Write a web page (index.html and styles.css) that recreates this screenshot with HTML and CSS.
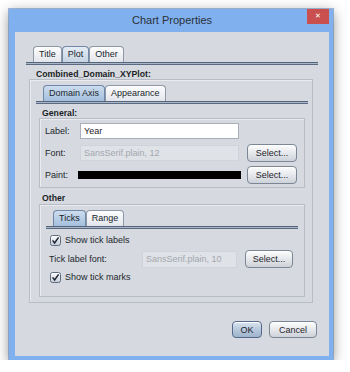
FILE: index.html
```html
<!DOCTYPE html>
<html lang="en">
<head>
    <meta charset="UTF-8">
    <title>Chart Properties</title>
    <link rel="stylesheet" href="styles.css">
</head>
<body>
    <div class="window">
        <div class="titlebar">
            <span></span>
            <span class="title">Chart Properties</span>
            <button type="button" class="close">&#x2715;</button>
        </div>

        <div class="client">
            <div class="tabpane">
                <div class="tabs">
                    <div class="tab">Title</div>
                    <div class="tab selected light">Plot</div>
                    <div class="tab">Other</div>
                </div>
                <div class="tab-line"></div>

                <div class="tab-body outer-body">
                    <div class="caption top-caption">Combined_Domain_XYPlot:</div>
                    <div class="group plot-group">
                        <div class="tabs">
                            <div class="tab selected">Domain Axis</div>
                            <div class="tab">Appearance</div>
                        </div>
                        <div class="tab-line"></div>

                        <div class="tab-body inner-body">
                            <div class="caption">General:</div>
                            <div class="group general">
                                <span class="lbl">Label:</span>
                                <input type="text" class="field" value="Year">
                                <span></span>

                                <span class="lbl">Font:</span>
                                <input type="text" class="field disabled" value="SansSerif.plain, 12" disabled>
                                <button type="button" class="btn select">Select...</button>

                                <span class="lbl">Paint:</span>
                                <div class="paint"></div>
                                <button type="button" class="btn select">Select...</button>
                            </div>

                            <div class="caption other-caption">Other</div>
                            <div class="group other">
                                <div class="tabs">
                                    <div class="tab selected">Ticks</div>
                                    <div class="tab">Range</div>
                                </div>
                                <div class="tab-line"></div>

                                <div class="ticks-body">
                                    <label class="check first-check">
                                        <svg width="11" height="11" viewBox="0 0 11 11">
                                            <defs>
                                                <linearGradient id="cb" x1="0" y1="0" x2="0" y2="1">
                                                    <stop offset="0" stop-color="#ffffff"/>
                                                    <stop offset="1" stop-color="#c4cbd5"/>
                                                </linearGradient>
                                            </defs>
                                            <rect x="0.5" y="0.5" width="10" height="10" rx="2" fill="url(#cb)" stroke="#5f6c80"/>
                                            <path d="M2.6 5.4 L4.6 8 L8.6 2.4" fill="none" stroke="#1d2330" stroke-width="1.5"/>
                                        </svg>
                                        Show tick labels
                                    </label>

                                    <div class="font-row">
                                        <span class="lbl tick-lbl">Tick label font:</span>
                                        <input type="text" class="field disabled tick-field" value="SansSerif.plain, 10" disabled>
                                        <button type="button" class="btn tick-select">Select...</button>
                                    </div>

                                    <label class="check last-check">
                                        <svg width="11" height="11" viewBox="0 0 11 11">
                                            <rect x="0.5" y="0.5" width="10" height="10" rx="2" fill="url(#cb)" stroke="#5f6c80"/>
                                            <path d="M2.6 5.4 L4.6 8 L8.6 2.4" fill="none" stroke="#1d2330" stroke-width="1.5"/>
                                        </svg>
                                        Show tick marks
                                    </label>
                                </div>
                            </div>
                        </div>
                    </div>
                </div>
            </div>

            <div class="buttons">
                <button type="button" class="btn default ok">OK</button>
                <button type="button" class="btn cancel">Cancel</button>
            </div>
        </div>
    </div>
</body>
</html>
```

FILE: styles.css
```css
* {
    margin: 0;
    padding: 0;
    box-sizing: border-box;
}

body {
    font-family: "Liberation Sans", Arial, sans-serif;
    font-size: 9px;
    color: #1f242b;
    background: #fff;
}

/* window frame */
.window {
    margin: 9px 0 0 9px;
    width: 324px;
    height: 351px;
    background: #80b1ee;
    padding: 0 4px 4px 6px;
    display: flex;
    flex-direction: column;
    box-shadow: 0 0 0 1px rgba(80, 120, 180, 0.5), 0 3px 12px rgba(0, 0, 0, 0.45);
}

.titlebar {
    height: 23px;
    display: grid;
    grid-template-columns: 1fr auto 1fr;
    align-items: start;
}

.title {
    font-size: 11px;
    line-height: 23px;
    color: #2b303a;
}

.close {
    justify-self: end;
    width: 22px;
    height: 15px;
    background: #c9504f;
    color: #fff;
    border: none;
    font-family: "DejaVu Sans", sans-serif;
    font-size: 7px;
    font-weight: bold;
    line-height: 15px;
}

.client {
    flex: 1;
    background: #d6d9df;
    padding: 14px 11px 0 11px;
    display: flex;
    flex-direction: column;
}

/* tabs */
.tabs {
    display: flex;
    padding-left: 7px;
    height: 16px;
}

.tab {
    height: 16px;
    padding: 0 5px;
    border: 1px solid #8e98a7;
    border-bottom: none;
    border-radius: 4px 4px 0 0;
    background: linear-gradient(#fdfdfe, #e2e5ea);
    line-height: 15px;
    color: #20252c;
}

.tab.selected {
    background: linear-gradient(#cddcee, #a3bfdd);
    border-color: #7088a7;
}

.tab.light {
    background: linear-gradient(#e4ebf3, #c7d4e3);
}

.tab-line {
    height: 3px;
    background: linear-gradient(#55647a 0 1px, #a9b6c8 1px 2px, #5b6a80 2px 3px);
}

.caption {
    font-weight: bold;
    font-size: 8.7px;
    line-height: 10px;
    margin-top: 4px;
    padding-left: 3px;
    color: #1b1f25;
}

.top-caption {
    padding-left: 7px;
}

.other-caption {
    margin-top: 5px;
    line-height: 11px;
}

.group {
    border: 1px solid #b8bdc5;
    box-shadow: inset 1px 1px 0 #e9ebef;
}

.outer-body {
    padding: 0 5px 0 3px;
}

.plot-group {
    padding: 5px 4px 5px 6px;
}

.inner-body {
    padding: 0 3px;
}

/* general box */
.general {
    display: grid;
    grid-template-columns: 33px 163px auto;
    grid-auto-rows: 18px;
    row-gap: 4px;
    align-items: center;
    padding: 3px 7px 3px 5px;
}

.lbl {
    color: #22272e;
}

.field {
    height: 16px;
    margin: 0 2px;
    border: 1px solid #a9afb8;
    background: #fff;
    font-family: "Liberation Sans", Arial, sans-serif;
    font-size: 9px;
    color: #1f242b;
    padding: 0 3px;
    outline: none;
}

.field.disabled {
    background: #dfe2e7;
    border-color: #d0d4da;
    color: #a3a7ae;
}

.paint {
    height: 8px;
    background: #000;
}

.btn {
    height: 18px;
    border: 1px solid #7c8695;
    border-radius: 4px;
    background: linear-gradient(#fdfdfd, #e3e6ea 55%, #cdd2d9);
    box-shadow: inset 0 1px 0 #fff;
    font-family: "Liberation Sans", Arial, sans-serif;
    font-size: 9px;
    color: #1f242b;
    padding: 0;
}

.select {
    width: 50px;
    margin-left: 6px;
}

/* other box */
.other {
    padding: 5px 6px 12px 6px;
}

.ticks-body {
    display: flex;
    flex-direction: column;
}

.check {
    display: flex;
    align-items: center;
    gap: 4px;
    height: 14px;
    padding-left: 4px;
    color: #22272e;
}

.first-check {
    margin-top: 4px;
}

.last-check {
    margin-top: 2px;
}

.font-row {
    display: flex;
    align-items: center;
    height: 18px;
    margin-top: 3px;
    padding-left: 3px;
}

.tick-lbl {
    width: 93px;
}

.tick-field {
    width: 95px;
    height: 17px;
    margin: 0;
}

.tick-select {
    width: 48px;
    margin-left: 8px;
}

/* dialog buttons */
.buttons {
    display: flex;
    justify-content: flex-end;
    gap: 7px;
    margin-top: 18px;
    padding-right: 1px;
}

.buttons .btn {
    height: 17px;
}

.ok {
    width: 30px;
}

.cancel {
    width: 48px;
}

.btn.default {
    background: linear-gradient(#dbe5f0, #b4c6da 55%, #9fb4cc);
    border-color: #56698a;
}
```
